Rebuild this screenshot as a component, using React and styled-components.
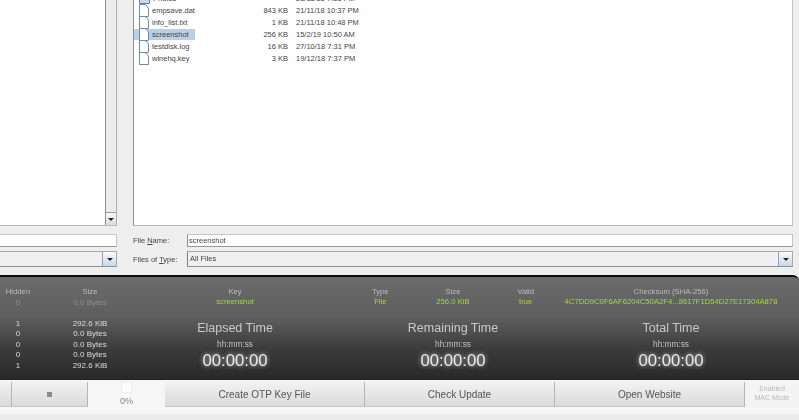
import styled, { createGlobalStyle } from 'styled-components';

const GlobalStyle = createGlobalStyle`
  html, body {
    margin: 0;
    height: 420px;
    overflow: hidden;
    background: #eeeeee;
    font-family: "Liberation Sans", Arial, sans-serif;
  }
`;

const files = [
  { name: 'Photos', size: '', date: '21/11/18 7:31 PM', folder: true },
  { name: 'empsave.dat', size: '843 KB', date: '21/11/18 10:37 PM' },
  { name: 'info_list.txt', size: '1 KB', date: '21/11/18 10:48 PM' },
  { name: 'screenshot', size: '256 KB', date: '15/2/19 10:50 AM', selected: true },
  { name: 'testdisk.log', size: '16 KB', date: '27/10/18 7:31 PM' },
  { name: 'winehq.key', size: '3 KB', date: '19/12/18 7:37 PM' },
];

const leftRows = [
  { count: '0', size: '0.0 Bytes', dim: 1 },
  { count: '', size: '', dim: 2 },
  { count: '1', size: '292.6 KiB' },
  { count: '0', size: '0.0 Bytes' },
  { count: '0', size: '0.0 Bytes' },
  { count: '0', size: '0.0 Bytes' },
  { count: '1', size: '292.6 KiB' },
];

const timers = ['Elapsed Time', 'Remaining Time', 'Total Time'];

function FileIcon() {
  return (
    <FileGlyph width="10" height="13" viewBox="0 0 10 13">
      <path d="M.5 .5H6Q9.5 2 9.5 5V12.5H.5Z" fill="#fff" stroke="#6d8cab" />
    </FileGlyph>
  );
}

function FolderIcon() {
  return (
    <FileGlyph width="11" height="13" viewBox="0 0 11 13">
      <path d="M.5 2.5H4L5 3.5H10.5V11.5H.5Z" fill="#cdd9e6" stroke="#5f7f9f" />
    </FileGlyph>
  );
}

function App() {
  return (
    <Page>
      <GlobalStyle />
      <Chooser>
        <Side>
          <ListRow>
            <SideList />
            <ScrollBar>
              <ScrollButton>
                <ArrowGlyph />
              </ScrollButton>
            </ScrollBar>
          </ListRow>
          <SideInput />
          <Combo $open>
            <ComboButton>
              <ArrowGlyph />
            </ComboButton>
          </Combo>
        </Side>
        <Main>
          <FileList>
            {files.map((file) => (
              <FileRow key={file.name}>
                <NameCell>
                  <NameTag $selected={file.selected}>
                    {file.folder ? <FolderIcon /> : <FileIcon />}
                    <span>{file.name}</span>
                  </NameTag>
                </NameCell>
                <SizeCell>{file.size}</SizeCell>
                <DateCell>{file.date}</DateCell>
              </FileRow>
            ))}
          </FileList>
          <FormRow>
            <FieldLabel>
              File <u>N</u>ame:
            </FieldLabel>
            <TextInput>screenshot</TextInput>
          </FormRow>
          <FormRow>
            <FieldLabel>
              Files of <u>T</u>ype:
            </FieldLabel>
            <Combo>
              <ComboText>All Files</ComboText>
              <ComboButton>
                <ArrowGlyph />
              </ComboButton>
            </Combo>
          </FormRow>
        </Main>
      </Chooser>

      <Panel>
        <Stats>
          <HeadCell>Hidden</HeadCell>
          <HeadCell>Size</HeadCell>
          {leftRows.map((row, i) => (
            <StatRow key={i} $dim={row.dim}>
              <span>{row.count}</span>
              <span>{row.size}</span>
            </StatRow>
          ))}
        </Stats>
        <Details>
          <InfoGrid>
            <InfoColumn $span={3}>
              <HeadCell>Key</HeadCell>
              <Value>screenshot</Value>
            </InfoColumn>
            <InfoColumn>
              <HeadCell>Type</HeadCell>
              <Value>File</Value>
            </InfoColumn>
            <InfoColumn>
              <HeadCell>Size</HeadCell>
              <Value>256.0 KiB</Value>
            </InfoColumn>
            <InfoColumn>
              <HeadCell>Valid</HeadCell>
              <Value>true</Value>
            </InfoColumn>
            <InfoColumn $span={3}>
              <HeadCell>Checksum (SHA-256)</HeadCell>
              <Value>4C7DD9C0F6AF6204C50A2F4...8617F1D54D27E17304A878</Value>
            </InfoColumn>
          </InfoGrid>
          <Timers>
            {timers.map((title) => (
              <Timer key={title}>
                <TimerTitle>{title}</TimerTitle>
                <TimerUnit>hh:mm:ss</TimerUnit>
                <TimerClock>00:00:00</TimerClock>
              </Timer>
            ))}
          </Timers>
        </Details>
      </Panel>

      <Toolbar>
        <ToolButton $width={12} />
        <ToolButton $width={76}>
          <StopMark />
        </ToolButton>
        <Progress>
          <ProgressBox />
          <span>0%</span>
        </Progress>
        <ToolButton $width={200}>Create OTP Key File</ToolButton>
        <ToolButton $width={190}>Check Update</ToolButton>
        <ToolButton $width={190}>Open Website</ToolButton>
        <ModeLabel>
          Enabled
          <br />
          MAC Mode
        </ModeLabel>
      </Toolbar>
      <Footer />
    </Page>
  );
}

const Page = styled.div`
  width: 799px;
  height: 420px;
  overflow: hidden;
  display: flex;
  flex-direction: column;
  filter: blur(0.5px);
`;

const Chooser = styled.div`
  height: 275px;
  flex: none;
  display: flex;
  gap: 16px;
  padding-right: 6px;
`;

const Side = styled.div`
  width: 117px;
  flex: none;
  display: flex;
  flex-direction: column;
`;

const ListRow = styled.div`
  height: 226px;
  flex: none;
  display: flex;
  background: #fff;
  border-bottom: 1px solid #b8b8b8;
  border-right: 1px solid #b0b0b0;
  box-sizing: border-box;
`;

const SideList = styled.div`
  flex: 1;
  border-right: 1px solid #8f8f8f;
`;

const ScrollBar = styled.div`
  width: 10px;
  background: #ececee;
  display: flex;
  flex-direction: column;
  justify-content: flex-end;
`;

const ScrollButton = styled.div`
  height: 12px;
  background: linear-gradient(#f8f8f8, #dcdcdc);
  border-top: 1px solid #9a9a9a;
  display: flex;
  align-items: center;
  justify-content: center;
`;

const ArrowGlyph = styled.i`
  width: 0;
  height: 0;
  border-left: 3.5px solid transparent;
  border-right: 3.5px solid transparent;
  border-top: 3px solid #222;
`;

const SideInput = styled.div`
  height: 13px;
  flex: none;
  box-sizing: border-box;
  margin: 8px 0 4px;
  background: #fff;
  border: 1px solid #c4c4c4;
  border-left: 0;
  border-bottom-color: #9a9a9a;
`;

const Main = styled.div`
  flex: 1;
  display: flex;
  flex-direction: column;
`;

const FileList = styled.div`
  height: 226px;
  flex: none;
  box-sizing: border-box;
  overflow: hidden;
  background: #fff;
  border-left: 1px solid #8f8f8f;
  border-right: 1px solid #c4c4c4;
  border-bottom: 1px solid #b8b8b8;
  margin-bottom: 8px;
`;

const FileRow = styled.div`
  height: 12px;
  display: flex;
  align-items: center;
  font-size: 7.5px;
  color: #454545;
  &:first-child {
    margin-top: -8px;
  }
`;

const NameCell = styled.div`
  width: 97px;
  flex: none;
`;

const NameTag = styled.div`
  width: fit-content;
  height: 11px;
  display: flex;
  align-items: center;
  gap: 3px;
  padding: 0 ${({ $selected }) => ($selected ? '6px' : '1px')} 0 5px;
  background: ${({ $selected }) => ($selected ? '#b8cfe6' : 'transparent')};
`;

const FileGlyph = styled.svg`
  flex: none;
  margin: -1px 0;
`;

const SizeCell = styled.div`
  width: 57px;
  flex: none;
  text-align: right;
`;

const DateCell = styled.div`
  margin-left: 8px;
  white-space: nowrap;
`;

const FormRow = styled.div`
  display: flex;
  align-items: center;
  font-size: 7.5px;
  color: #454545;
  margin-bottom: 4px;
`;

const FieldLabel = styled.div`
  width: 54px;
  flex: none;
`;

const TextInput = styled.div`
  flex: 1;
  height: 13px;
  box-sizing: border-box;
  line-height: 11px;
  background: #fff;
  border: 1px solid #c4c4c4;
  border-left-color: #8f8f8f;
  border-bottom-color: #9a9a9a;
  padding-left: 1px;
`;

const Combo = styled.div`
  flex: ${({ $open }) => ($open ? 'none' : 1)};
  height: 16px;
  box-sizing: border-box;
  display: flex;
  align-items: stretch;
  justify-content: flex-end;
  background: #f0f0f2;
  border: 1px solid #a8a8a8;
  border-left: ${({ $open }) => ($open ? '0' : '1px solid #6f8296')};
  border-bottom-color: #8f8f8f;
`;

const ComboText = styled.div`
  flex: 1;
  line-height: 14px;
  padding-left: 2px;
`;

const ComboButton = styled.div`
  width: 13px;
  background: linear-gradient(#fafbfc, #c9d8e8);
  border-left: 1px solid #8fa2b5;
  display: flex;
  align-items: center;
  justify-content: center;
`;

const Panel = styled.div`
  height: 105px;
  flex: none;
  box-sizing: border-box;
  display: flex;
  padding-top: 10px;
  background: linear-gradient(#6b6b6b 0%, #5e5e5e 40%, #3c3c3c 70%, #292929 100%);
  border-top: 2px solid #0c0c0c;
  border-bottom: 1px solid #222;
  border-top-right-radius: 6px;
  font-size: 7.7px;
  color: #c4c4c4;
`;

const Stats = styled.div`
  width: 126px;
  flex: none;
  display: grid;
  grid-template-columns: 36px 108px;
  grid-auto-rows: 10.5px;
  align-content: start;
  text-align: center;
`;

const HeadCell = styled.div`
  color: #bdbdbd;
  line-height: 10px;
  text-align: center;
`;

const StatRow = styled.div`
  display: contents;
  & > span {
    line-height: 10.5px;
    font-size: 8px;
    color: #dcdcdc;
    opacity: ${({ $dim }) => ($dim === 1 ? 0.35 : $dim === 2 ? 0.1 : 1)};
  }
`;

const Details = styled.div`
  width: 654px;
  flex: none;
  display: flex;
  flex-direction: column;
`;

const InfoGrid = styled.div`
  display: grid;
  grid-template-columns: repeat(9, 1fr);
`;

const InfoColumn = styled.div`
  grid-column: span ${({ $span }) => $span || 1};
  text-align: center;
`;

const Value = styled.div`
  color: #a4d63a;
  line-height: 10px;
  white-space: nowrap;
`;

const Timers = styled.div`
  display: grid;
  grid-template-columns: repeat(3, 1fr);
  margin-top: 13px;
`;

const Timer = styled.div`
  display: flex;
  flex-direction: column;
  align-items: center;
`;

const TimerTitle = styled.div`
  font-size: 12.5px;
  line-height: 16px;
  color: #c8c8c8;
`;

const TimerUnit = styled.div`
  font-size: 8.3px;
  line-height: 10px;
  margin-top: 3px;
  color: #c0c0c0;
`;

const TimerClock = styled.div`
  font-size: 16.7px;
  line-height: 20px;
  margin-top: 2px;
  color: #e8e8e8;
  text-shadow: 0 0 4px rgba(255, 255, 255, 0.8);
`;

const Toolbar = styled.div`
  height: 25px;
  flex: none;
  display: flex;
  padding-top: 2px;
  background: #f4f4f4;
  font-size: 10px;
  color: #555;
`;

const ToolButton = styled.div`
  width: ${({ $width }) => $width}px;
  flex: none;
  box-sizing: border-box;
  display: flex;
  align-items: center;
  justify-content: center;
  background: linear-gradient(#f2f2f2, #dadada);
  border-right: 1px solid #b4b4b4;
  border-bottom: 1px solid #c8c8c8;
`;

const StopMark = styled.i`
  width: 5px;
  height: 5px;
  background: #8c8c8c;
`;

const Progress = styled.div`
  width: 77px;
  flex: none;
  display: flex;
  flex-direction: column;
  align-items: center;
  gap: 3px;
  background: #f6f6f6;
  font-size: 9px;
  color: #888;
`;

const ProgressBox = styled.i`
  width: 9px;
  height: 9px;
  background: #fcfcfc;
  border: 1px solid #ececec;
`;

const ModeLabel = styled.div`
  flex: 1;
  text-align: center;
  font-size: 7px;
  line-height: 9px;
  padding-top: 2px;
  color: #b8b8b8;
`;

const Footer = styled.div`
  flex: 1;
  background: #f5f5f5;
  border-bottom: 6px solid #ececec;
`;

export default App;
